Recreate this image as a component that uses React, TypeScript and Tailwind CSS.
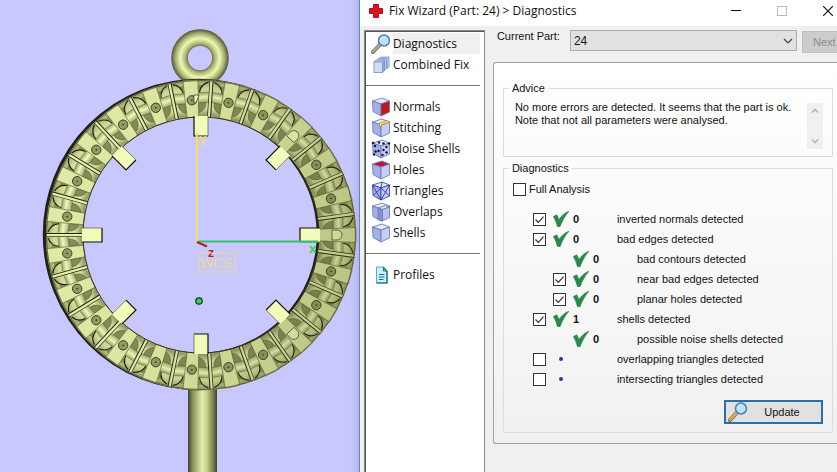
import React from "react";

/* ------------------------------------------------------------------ */
/* 3D viewport                                                         */
/* ------------------------------------------------------------------ */

const SEGMENTS = 23;

function Cell() {
  return (
    <g>
      <path d="M5.5 -118 L7.5 -155 L19 -154 L16 -119 Z" fill="url(#cellShade)" />
      <path d="M7.4 -150 L12 -149 A11 11 0 0 0 7 -141 Z" fill="#878d58" />
      <path d="M8 -142 A13 13 0 0 1 18 -152" fill="none" stroke="#1d1f12" strokeWidth="1.2" />
      <path d="M6.5 -132 L14 -132 A11 11 0 0 1 6.2 -122 Z" fill="#868c57" stroke="#4b5030" strokeWidth="0.5" />
      <rect x="7" y="-142" width="10" height="10" fill="url(#pinShade)" />
      <path d="M7 -142 H17 M7 -132 H17" stroke="#5b6038" strokeWidth="0.5" />
    </g>
  );
}

function Segment({ angle, open }: { angle: number; open: boolean }) {
  return (
    <g transform={`rotate(${angle})`}>
      <Cell />
      <g transform="scale(-1 1)">
        <Cell />
      </g>
      <path d="M-7.5 -155 L7.5 -155 L5.8 -118 L-5.8 -118 Z" fill="#e0eaa4" stroke="#5b6038" strokeWidth="0.6" />
      {open ? (
        <path d="M-5 -136 A5 5 0 0 1 5 -136 V-131 H-5 Z" fill="#f4ffc0" stroke="#2c2f1b" strokeWidth="0.7" />
      ) : (
        <g>
          <circle cx="0" cy="-135" r="4.7" fill="#959b61" stroke="#2c2f1b" strokeWidth="0.8" />
          <circle cx="0" cy="-135" r="0.8" fill="#2c2f1b" />
        </g>
      )}
    </g>
  );
}

function Separator({ angle }: { angle: number }) {
  return (
    <g transform={`rotate(${angle})`}>
      <rect x="-2" y="-155" width="4" height="37" fill="#20231a" />
      <rect x="-1.3" y="-155" width="2.3" height="37" fill="#e6efac" />
    </g>
  );
}

function Viewport() {
  const step = 360 / SEGMENTS;
  const items = Array.from({ length: SEGMENTS }, (_, i) => 90 + i * step);
  const tabs = [0, 45, 90, 135, 180, 225, 270, 315];
  return (
    <svg className="block h-full w-full" viewBox="0 0 359 472" preserveAspectRatio="xMinYMin slice" role="img" aria-label="Part preview">
      <defs>
        <linearGradient id="rod" x1="0" x2="1">
          <stop offset="0" stopColor="#3f4329" />
          <stop offset="0.15" stopColor="#878d5a" />
          <stop offset="0.48" stopColor="#e4eda9" />
          <stop offset="0.65" stopColor="#c6cf8c" />
          <stop offset="0.9" stopColor="#6d7347" />
          <stop offset="1" stopColor="#3f4329" />
        </linearGradient>
        <radialGradient id="eye" gradientUnits="userSpaceOnUse" cx="200" cy="58" r="28.5">
          <stop offset="0.42" stopColor="#5d6240" />
          <stop offset="0.5" stopColor="#a6ae70" />
          <stop offset="0.69" stopColor="#eef8b2" />
          <stop offset="0.86" stopColor="#a8b070" />
          <stop offset="1" stopColor="#54593a" />
        </radialGradient>
        <linearGradient id="cellShade" x1="0" y1="0" x2="0" y2="1">
          <stop offset="0" stopColor="#979d63" />
          <stop offset="0.25" stopColor="#d2db98" />
          <stop offset="0.8" stopColor="#d8e19e" />
          <stop offset="1" stopColor="#898f5a" />
        </linearGradient>
        <linearGradient id="pinShade" x1="0" y1="0" x2="0" y2="1">
          <stop offset="0" stopColor="#a0a669" />
          <stop offset="0.45" stopColor="#f2fcba" />
          <stop offset="1" stopColor="#a5ac70" />
        </linearGradient>
        <linearGradient id="light" gradientUnits="userSpaceOnUse" x1="-155" y1="-30" x2="155" y2="30">
          <stop offset="0" stopColor="#4a5020" stopOpacity="0" />
          <stop offset="0.35" stopColor="#4a5020" stopOpacity="0.03" />
          <stop offset="1" stopColor="#4a5020" stopOpacity="0.25" />
        </linearGradient>
        <linearGradient id="edge" x1="0" x2="1">
          <stop offset="0" stopColor="#c8c8ff" />
          <stop offset="1" stopColor="#b4b6ec" />
        </linearGradient>
      </defs>
      <rect width="359" height="472" fill="#c8c8ff" />
      <rect x="350" width="9" height="472" fill="url(#edge)" />

      <rect x="188" y="385" width="29" height="87" fill="url(#rod)" />
      <circle cx="200" cy="58" r="20.5" fill="none" stroke="url(#eye)" strokeWidth="16.5" />

      {/* side wall of the ring, showing left of the face and inside on the right */}
      <circle cx="198.5" cy="234.5" r="137" fill="none" stroke="#1f211a" strokeWidth="37.5" />
      <g transform="translate(201 235)">
        <circle r="136.5" fill="none" stroke="#b3ba7a" strokeWidth="37" />
        {items.map((a, i) => (
          <Segment key={a} angle={a} open={i === 0 || i === 3 || i === 20} />
        ))}
        {items.map((a) => (
          <Separator key={a} angle={a + step / 2} />
        ))}
        <circle r="136.5" fill="none" stroke="url(#light)" strokeWidth="37" />
        <circle r="154.5" fill="none" stroke="#4a4e30" strokeWidth="0.8" />
        <circle r="118" fill="none" stroke="#33361f" strokeWidth="1" />
      </g>

      {/* hour tabs */}
      {tabs.map((a) => (
        <g key={a} transform={`translate(201 235) rotate(${a})`}>
          <rect x="-7" y="-119" width="14" height={20} fill="#f1fcba" />
          <path d="M-7 -119 V-99 H7" fill="none" stroke="#111208" strokeWidth="1.2" />
          <path d="M7 -99 V-119" fill="none" stroke="#6b7048" strokeWidth="0.8" />
        </g>
      ))}
      <path d="M194 95 H199 L196 103 H194 Z" fill="#f4ffc0" stroke="#222" strokeWidth="0.7" />

      {/* coordinate axes */}
      <path d="M197 133 V242" stroke="#f2e25a" strokeWidth="2" />
      <path d="M198 241.5 H318" stroke="#2fc46a" strokeWidth="2" />
      <path d="M197 242 L207 246.5" stroke="#b3221f" strokeWidth="2" />
      <g fontFamily="Liberation Sans, sans-serif" fontWeight="bold">
        <text x="199" y="143" fontSize="13" fill="#eedd5a">y</text>
        <text x="309" y="253" fontSize="13" fill="#2fd45a">x</text>
        <text x="208" y="257" fontSize="12" fill="#c01818">z</text>
      </g>
      <rect x="199" y="253" width="36" height="19" fill="none" stroke="#ead98c" strokeWidth="1" />
      <text x="200" y="268" fontSize="14" fontFamily="Liberation Sans, sans-serif" fill="#ead98c">WCS</text>
      <circle cx="199" cy="301" r="3.2" fill="#2fd84c" stroke="#10321a" strokeWidth="1.2" />
    </svg>
  );
}

/* ------------------------------------------------------------------ */
/* Icons                                                               */
/* ------------------------------------------------------------------ */

function Magnifier({ handle }: { handle: string }) {
  return (
    <svg className="h-5 w-5 shrink-0" viewBox="0 0 20 20" aria-hidden="true">
      <path d="M2 18 L8.5 11" stroke="#6b664c" strokeWidth="4" strokeLinecap="round" />
      <path d="M2 17.8 L8.3 11" stroke={handle} strokeWidth="2.6" strokeLinecap="round" />
      <circle cx="13" cy="6.5" r="5.5" fill="#bfe0fa" stroke="#4a7fb5" strokeWidth="1.5" />
      <path d="M9.5 7 A4 4 0 0 1 14 3 A6 6 0 0 0 9.5 7 Z" fill="#fff" />
    </svg>
  );
}

type CubeKind = "normals" | "stitching" | "noise" | "holes" | "triangles" | "overlaps" | "shells";

const specks = [
  [4, 7], [7.5, 12], [4.5, 12.5], [8, 3.5], [12.5, 4.5], [15.5, 8],
  [12.5, 11], [15.5, 13.5], [11.5, 16], [2, 4], [18, 4.5], [3, 15.5],
];

function Cube({ kind }: { kind: CubeKind }) {
  const wire = kind === "triangles";
  const line = wire ? "#34369c" : "#6a74b0";
  return (
    <svg className="h-5 w-5 shrink-0" viewBox="0 0 20 20" aria-hidden="true">
      <path d="M1.5 4 L11 1 L18.5 4 L10 7 Z" fill={kind === "holes" ? "#b81830" : "#e3e8fb"} stroke={line} strokeWidth="0.8" />
      <path d="M1.5 4 L10 7 V19 L2 14.5 Z" fill="#a3b1e8" stroke={line} strokeWidth="0.8" />
      <path d="M10 7 L18.5 4 V15 L10 19 Z" fill={kind === "normals" ? "#c4161c" : "#c3cdf5"} stroke={line} strokeWidth="0.8" />
      {kind === "stitching" && (
        <g fill="none">
          <path d="M9.5 8.5 V6 L17 3.5" stroke="#b08a20" strokeWidth="3" />
          <path d="M9.5 8 V6 L17 3.5" stroke="#ffe57a" strokeWidth="1.4" />
        </g>
      )}
      {kind === "noise" && (
        <g fill="#10153a">
          {specks.map(([x, y]) => (
            <circle key={`${x}-${y}`} cx={x} cy={y} r="1.2" />
          ))}
        </g>
      )}
      {wire && (
        <path d="M1.5 4 L10 19 L18.5 4 M11 1 L10 7 M10 7 L2 14.5 M10 7 L18.5 15" fill="none" stroke={line} strokeWidth="0.9" />
      )}
      {kind === "overlaps" && (
        <g stroke={line} strokeWidth="0.8">
          <path d="M7 6 L14 3.5 L18.5 5 L11.5 7.5 Z" fill="#dfe5fb" />
          <path d="M7 6 L11.5 7.5 V19 L7 17 Z" fill="#7f93dc" />
          <path d="M11.5 7.5 L18.5 5 V15.5 L11.5 19 Z" fill="#b5c4f3" />
        </g>
      )}
    </svg>
  );
}

function StackIcon() {
  return (
    <svg className="h-5 w-5 shrink-0" viewBox="0 0 20 20" aria-hidden="true" stroke="#7f93c8" strokeWidth="0.9">
      <path d="M8 4 L10 2 H18 V12 L16 13.5 V4 Z" fill="#c9d6f2" />
      <path d="M5.5 5.5 L7.5 3.5 H15.5 V13.5 L13.5 15.5 V5.5 Z" fill="#b7c8ee" />
      <path d="M3 7 L5 5.2 H13.5 L11.5 7 Z" fill="#eaf0fc" />
      <path d="M11.5 7 L13.5 5.2 V15.5 L11.5 17.5 Z" fill="#93a8de" />
      <rect x="3" y="7" width="8.5" height="10.5" fill="#cfdcf6" />
    </svg>
  );
}

function PageIcon() {
  return (
    <svg className="h-5 w-5 shrink-0" viewBox="0 0 20 20" aria-hidden="true">
      <path d="M5.5 2 H12.5 L16 6 V18 H5.5 Z" fill="#c9f3fb" stroke="#4fb3c6" strokeWidth="1" />
      <path d="M16 6 V18 H5.5" fill="none" stroke="#125c70" strokeWidth="1.2" />
      <path d="M12.5 2 V6 H16 Z" fill="#3fb4cc" stroke="#125c70" strokeWidth="0.8" />
      <path d="M8 9.5 H13.5 M8 12 H13.5 M8 14.5 H12.5" stroke="#23659c" strokeWidth="1.1" />
    </svg>
  );
}

function GreenTick() {
  return (
    <svg className="h-4 w-4 shrink-0" viewBox="0 0 16 16" aria-hidden="true">
      <path d="M0.3 5.5 L3.8 3.8 L6 8.5 C8.5 4.5 12 1.5 16 0.2 C12 4.5 9.5 9.5 7 15.8 H4.5 C3.5 12 2.2 8.5 0.3 5.5 Z" fill="#2a8a4e" stroke="#22803f" strokeWidth="0.6" />
    </svg>
  );
}

/* ------------------------------------------------------------------ */
/* Window parts                                                        */
/* ------------------------------------------------------------------ */

function CheckBox({ id, checked }: { id: string; checked?: boolean }) {
  return (
    <span className="grid h-[13px] w-[13px] shrink-0">
      <input id={id} type="checkbox" defaultChecked={checked} className="peer col-start-1 row-start-1 h-[13px] w-[13px] appearance-none border border-[#333] bg-white" />
      <svg className="pointer-events-none invisible col-start-1 row-start-1 h-[13px] w-[13px] peer-checked:visible" viewBox="0 0 13 13" aria-hidden="true">
        <path d="M2.5 6.5 L5.3 9.3 L10.5 3.7" fill="none" stroke="#333" strokeWidth="1.2" />
      </svg>
    </span>
  );
}

type Row = { id: string; text: string; count?: number; box: boolean; checked?: boolean; nested?: boolean };

const rows: Row[] = [
  { id: "inverted", text: "inverted normals detected", count: 0, box: true, checked: true },
  { id: "edges", text: "bad edges detected", count: 0, box: true, checked: true },
  { id: "contours", text: "bad contours detected", count: 0, box: false, nested: true },
  { id: "near", text: "near bad edges detected", count: 0, box: true, checked: true, nested: true },
  { id: "planar", text: "planar holes detected", count: 0, box: true, checked: true, nested: true },
  { id: "shells", text: "shells detected", count: 1, box: true, checked: true },
  { id: "noise", text: "possible noise shells detected", count: 0, box: false, nested: true },
  { id: "overlapping", text: "overlapping triangles detected", box: true },
  { id: "intersecting", text: "intersecting triangles detected", box: true },
];

function DiagnosticRow({ row }: { row: Row }) {
  return (
    <li className={row.nested ? "flex h-5 items-center pl-5" : "flex h-5 items-center"}>
      <span className="w-5 shrink-0">{row.box && <CheckBox id={row.id} checked={row.checked} />}</span>
      <span className="flex w-5 shrink-0 items-center">
        {row.count === undefined ? <span className="ml-[6px] h-1 w-1 rounded-full bg-[#2638a0]" /> : <GreenTick />}
      </span>
      <span className="w-11 shrink-0 font-bold">{row.count}</span>
      {row.box ? (
        <label htmlFor={row.id} className="whitespace-nowrap">{row.text}</label>
      ) : (
        <span className="whitespace-nowrap">{row.text}</span>
      )}
    </li>
  );
}

const cubes: { kind: CubeKind; label: string }[] = [
  { kind: "normals", label: "Normals" },
  { kind: "stitching", label: "Stitching" },
  { kind: "noise", label: "Noise Shells" },
  { kind: "holes", label: "Holes" },
  { kind: "triangles", label: "Triangles" },
  { kind: "overlaps", label: "Overlaps" },
  { kind: "shells", label: "Shells" },
];

function NavItem({ icon, label, active }: { icon: React.ReactNode; label: string; active?: boolean }) {
  return (
    <button type="button" className="flex h-[21px] w-full items-center gap-[2px] text-left">
      {icon}
      <span className={active ? "flex h-[21px] flex-1 items-center bg-[#f0f0f0]" : "flex-1"}>{label}</span>
    </button>
  );
}

function NavRule() {
  return (
    <div className="flex h-[21px] items-center">
      <hr className="w-full border-t border-[#777]" />
    </div>
  );
}

export default function App() {
  return (
    <div className="flex h-screen min-h-[472px] overflow-hidden bg-[#f0f0f0] font-['Liberation_Sans',Arial,sans-serif] text-[11px] leading-[13px] text-[#111]">
      <section className="w-[43%] min-w-0 shrink-0 border-r border-[#5b87c5]">
        <Viewport />
      </section>

      <section className="flex min-w-0 flex-1 flex-col overflow-hidden">
        <header className="flex h-[26px] shrink-0 items-center bg-white pb-1 pl-2 font-['Open_Sans','Noto_Sans',sans-serif]">
          <svg className="h-4 w-4 shrink-0" viewBox="0 0 16 16" aria-hidden="true">
            <path d="M5.5 1.5 H10.5 V5.5 H14.5 V10.5 H10.5 V14.5 H5.5 V10.5 H1.5 V5.5 H5.5 Z" fill="#d9151b" stroke="#b01015" strokeWidth="1" strokeLinejoin="round" />
          </svg>
          <h1 className="ml-[5px] flex-1 text-[12px] leading-4 whitespace-nowrap">Fix Wizard (Part: 24) &gt; Diagnostics</h1>
          <div className="flex shrink-0 items-center">
            <button type="button" aria-label="Minimize" className="mr-9">
              <svg className="h-[10px] w-[10px]" viewBox="0 0 10 10"><path d="M0 4.5 H10" stroke="#111" /></svg>
            </button>
            <button type="button" aria-label="Maximize" disabled className="mr-9">
              <svg className="h-[10px] w-[10px]" viewBox="0 0 10 10"><rect x="0.5" y="0.5" width="9" height="9" fill="none" stroke="#bbb" /></svg>
            </button>
            <button type="button" aria-label="Close" className="mr-1">
              <svg className="h-[10px] w-[10px]" viewBox="0 0 10 10"><path d="M0 0 L10 10 M10 0 L0 10" stroke="#111" strokeWidth="1.2" /></svg>
            </button>
          </div>
        </header>

        <div className="flex flex-1">
          <nav className="mt-1 ml-1 w-[121px] shrink-0 border border-b-0 border-[#888] bg-white">
            <div className="h-full border-t border-l border-[#555] pr-1 text-[12px] leading-4 font-['Open_Sans','Noto_Sans',sans-serif]">
              <div className="pt-px pl-[5px]">
                <NavItem icon={<Magnifier handle="#a9a88c" />} label="Diagnostics" active />
                <NavItem icon={<StackIcon />} label="Combined Fix" />
              </div>
              <NavRule />
              <div className="pl-[5px]">
                {cubes.map((c) => (
                  <NavItem key={c.kind} icon={<Cube kind={c.kind} />} label={c.label} />
                ))}
              </div>
              <NavRule />
              <div className="pl-[5px]">
                <NavItem icon={<PageIcon />} label="Profiles" />
              </div>
            </div>
          </nav>

          <main className="ml-2 flex min-w-0 flex-1 flex-col">
            <div className="flex items-start pt-1 pl-1">
              <label htmlFor="part" className="w-[73px] shrink-0 whitespace-nowrap">
                Current Part:
              </label>
              <div className="grid flex-1">
                <select id="part" defaultValue="24" className="col-start-1 row-start-1 h-[21px] w-full appearance-none border border-[#adadad] bg-[#e1e1e1] pt-px pl-[3px] text-[12px]">
                  <option>24</option>
                </select>
                <svg className="pointer-events-none col-start-1 row-start-1 mr-1 h-[10px] w-[10px] self-center justify-self-end" viewBox="0 0 10 10" aria-hidden="true">
                  <path d="M1 3 L5 7 L9 3" fill="none" stroke="#444" strokeWidth="1.2" />
                </svg>
              </div>
              <button type="button" disabled className="-mr-5 ml-[5px] mt-px h-[22px] w-[55px] shrink-0 border border-[#bfbfbf] bg-[#cccccc] pl-[10px] text-left whitespace-nowrap text-[#8a8a8a]">
                Next &gt;
              </button>
            </div>

            <div className="mt-[9px] rounded-l-[3px] border border-r-0 border-[#a0a0a0] bg-linear-to-b from-white via-[#f9f9f9] to-[#f0f0f0] pt-[19px] pr-1 pb-[10px] pl-[9px]">
              <fieldset className="border border-[#dcdcdc] pl-[11px]">
                <legend className="-ml-[6px] px-[3px]">Advice</legend>
                <div className="flex h-[61px] items-start justify-between pt-[2px] pr-[9px]">
                  <textarea
                    readOnly
                    aria-label="Advice"
                    rows={2}
                    className="mt-1 block h-[30px] min-w-0 flex-1 resize-none overflow-hidden bg-transparent"
                    defaultValue={"No more errors are detected. It seems that the part is ok.\nNote that not all parameters were analysed."}
                  />
                  <div className="mt-[6px] flex h-[46px] w-4 shrink-0 flex-col items-center justify-between bg-[#f0f0f0] py-1">
                    <button type="button" aria-label="Scroll up">
                      <svg className="block h-2 w-2" viewBox="0 0 8 8"><path d="M1 5.5 L4 2.5 L7 5.5" fill="none" stroke="#b5b5b5" strokeWidth="1.6" /></svg>
                    </button>
                    <button type="button" aria-label="Scroll down">
                      <svg className="block h-2 w-2" viewBox="0 0 8 8"><path d="M1 2.5 L4 5.5 L7 2.5" fill="none" stroke="#b5b5b5" strokeWidth="1.6" /></svg>
                    </button>
                  </div>
                </div>
              </fieldset>

              <fieldset className="mt-[5px] border border-[#dcdcdc] pr-[9px] pb-2 pl-[9px]">
                <legend className="-ml-[4px] px-[3px]">Diagnostics</legend>
                <div className="flex items-center gap-[3px] pt-2">
                  <CheckBox id="full" />
                  <label htmlFor="full">Full Analysis</label>
                </div>
                <ul className="mt-[13px] pl-5">
                  {rows.map((r) => (
                    <DiagnosticRow key={r.id} row={r} />
                  ))}
                </ul>
                <div className="mt-[11px] flex justify-end">
                  <button type="button" className="flex h-6 w-[99px] items-center border-2 border-[#2a6fa8] bg-[#e1e1e1] pl-[2px]">
                    <Magnifier handle="#e2a55c" />
                    <span className="flex-1 pr-[5px] text-center">Update</span>
                  </button>
                </div>
              </fieldset>
            </div>
          </main>
        </div>
      </section>
    </div>
  );
}
